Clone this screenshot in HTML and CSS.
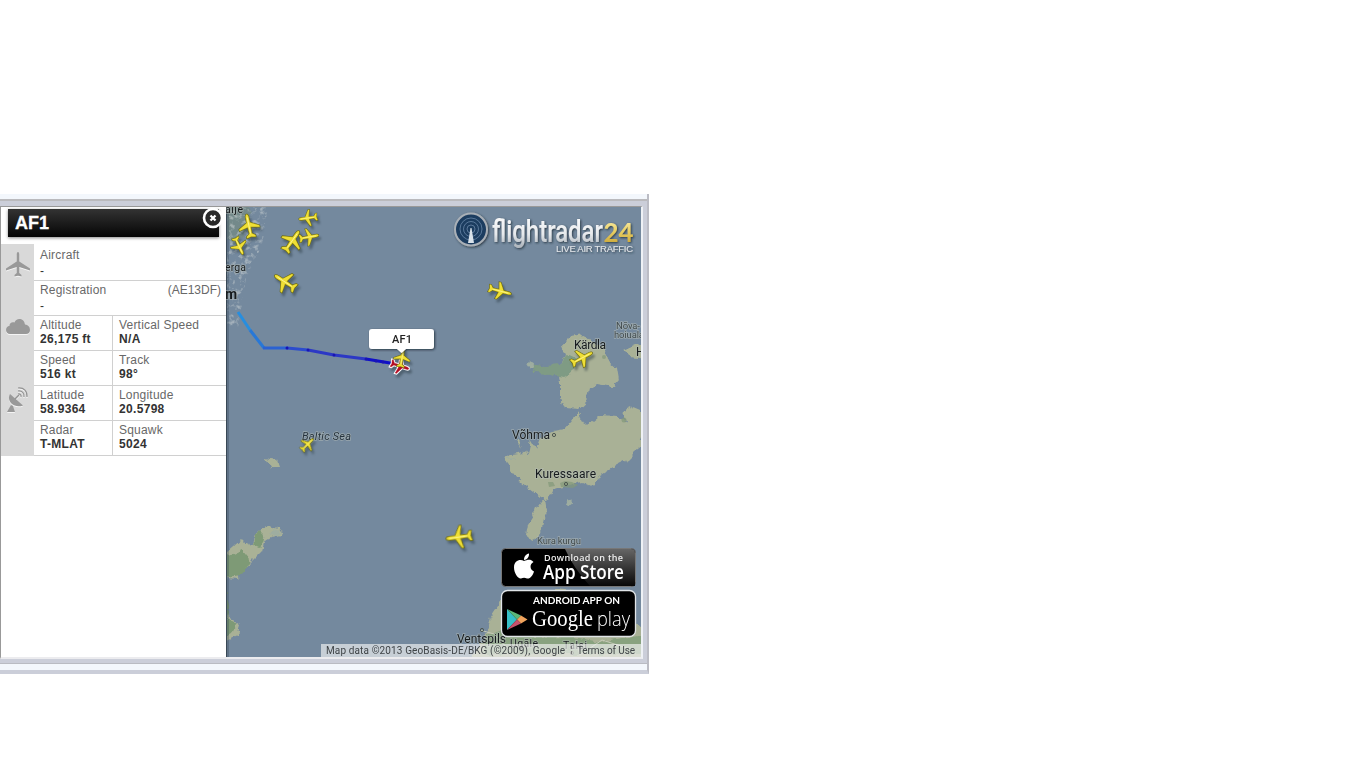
FILE: index.html
```html
<!DOCTYPE html>
<html lang="en">
<head>
<meta charset="utf-8">
<title>Flight AF1</title>
<link rel="stylesheet" href="styles.css">
</head>
<body>
<main class="widget">
  <div class="frame">
    <div class="content">
      <aside class="panel">
        <header class="callsign">AF1
          <svg class="close" viewBox="0 0 22 22"><circle cx="11" cy="11" r="9" fill="#292929" stroke="#fff" stroke-width="2.6"/><path d="M8.500 8.500l5 5M13.500 8.500l-5 5" stroke="#fff" stroke-width="2.300"/></svg>
        </header>
        <div class="details">
          <div class="rail">
            <svg class="rail-plane" viewBox="0 0 24 26"><path d="M12 1c-1 0-1.300 1.500-1.300 3v6.500L0 17.500V19.500l10.700-3.500v6L8.500 24v1.500l3.500-.7 3.500.7V24l-2.200-2V16L24 19.500v-2l-10.700-7V4c0-1.500-.3-3-1.300-3z"/></svg>
            <svg class="rail-cloud" viewBox="0 0 24 17"><path d="M4 16C1.500 16 0 14 0 12 0 9.500 1.800 8 3.500 7.800 3.500 5 6 3.500 8.500 4.500 10-.5 18-.5 19 6.500c3 .3 5 2.300 5 5.500 0 2.500-1.500 4-4 4z"/></svg>
            <svg class="rail-dish" viewBox="0 0 22 26"><path d="M3 7c-4 7 4 15 13 11.500zM4 18l-4 7h8l-2-6z"/><path d="M8 12l4-4" stroke="#929292" stroke-width="1.500"/><g fill="none" stroke="#929292" stroke-width="1.200"><path d="M11 7c2-.5 3.500 1 3 3M11 4c4-.5 6.500 2 6 6M11 1c6-.5 9.500 3 9 9"/></g></svg>
          </div>
          <div class="rows">
            <div class="row wide"><div class="cell"><span>Aircraft</span><b class="dash">-</b></div></div>
            <div class="row wide"><div class="cell"><span class="split"><span>Registration</span><span class="hex">(AE13DF)</span></span><b class="dash">-</b></div></div>
            <div class="row"><div class="cell"><span>Altitude</span><b>26,175 ft</b></div><div class="cell"><span>Vertical Speed</span><b>N/A</b></div></div>
            <div class="row"><div class="cell"><span>Speed</span><b>516 kt</b></div><div class="cell"><span>Track</span><b>98°</b></div></div>
            <div class="row"><div class="cell"><span>Latitude</span><b>58.9364</b></div><div class="cell"><span>Longitude</span><b>20.5798</b></div></div>
            <div class="row"><div class="cell"><span>Radar</span><b>T-MLAT</b></div><div class="cell"><span>Squawk</span><b>5024</b></div></div>
          </div>
        </div>
      </aside>
      <svg class="map" viewBox="226 207 415 450">
        <defs>
          <filter id="coast" x="-10%" y="-10%" width="120%" height="120%"><feTurbulence type="fractalNoise" baseFrequency=".13" numOctaves="3" seed="4"/><feDisplacementMap in="SourceGraphic" scale="8" xChannelSelector="R" yChannelSelector="G"/></filter>
          <filter id="speckle" x="0" y="0" width="1" height="1"><feTurbulence type="fractalNoise" baseFrequency=".2" numOctaves="3" seed="8" result="n"/><feColorMatrix in="n" values="0 0 0 0 .64  0 0 0 0 .68  0 0 0 0 .68  4 0 0 0 -2"/><feComposite in2="SourceGraphic" operator="in"/></filter>
          <filter id="shade" x="-20%" y="-30%" width="140%" height="160%"><feDropShadow dx="1" dy="1" stdDeviation="1" flood-color="#1b2630" flood-opacity=".8"/></filter>
          <linearGradient id="silver" x2="0" y2="1"><stop stop-color="#fff"/><stop offset=".6" stop-color="#e6e9ec"/><stop offset=".9" stop-color="#b2b9c0"/></linearGradient>
          <linearGradient id="gold" x2="0" y2="1"><stop stop-color="#fff6c0"/><stop offset=".5" stop-color="#e8ce62"/><stop offset="1" stop-color="#c49d2e"/></linearGradient>
          <linearGradient id="black" x2="0" y2="1"><stop stop-color="#666"/><stop offset="1" stop-color="#080808"/></linearGradient>
          <path id="plane" d="M0-12C-1-12-1.500-10-1.500-8.500V-3.500L-10.500 1.500V3L-1.500 1-1.100 8-4.500 10.500V12L0 11 4.500 12V10.500L1.100 8 1.500 1 10.500 3V1.500L1.500-3.500V-8.500C1.500-10 1-12 0-12Z"/>
          <g id="jet"><use href="#plane" stroke="#66640f" stroke-width="1.600"/><use href="#plane" fill="#efdf35" stroke="#efdf35" stroke-width=".3"/><path d="M0-9V8" stroke="#fff89c" stroke-width=".8"/></g>
        </defs>
        <rect x="226" y="207" width="415" height="450" fill="#74899e"/>
        <g filter="url(#coast)" transform="translate(2 0)">
          <path fill="#748a83" opacity=".75" d="M222 203h24l3 18-8 15-8 9-8-7-7 2z"/>
          <path fill="#a9b196" d="M568 337l14-2 7 8 14 4 3 13 9 8 2 12-6 7-17-3-7 5-3 13-8 7-13-1-4-10v-17l-5-8 10-18-4-10z"/>
          <path fill="#7f9b84" d="M530 363l14 3 14-1 7-10 9 4-3 14-9 4-14-3-15-1z"/>
          <path fill="#a9b196" d="M515 440l4 4 6 11 3-16 6 10 5-12 13-6 11-2 7-8 6-9 6 12 9-3 6-5 18 1 14 8 7 9 6 11-9 7-8 8-10 5-16 10-7 12-12-5-17 4-11 2-6 12-9-3-18-15-14-18-3-4 8-6 13-2-5-12z"/>
          <path fill="#a9b196" d="M542 498l2 13-4 17-8 12-9-4 2-12 8-13zM620 413l12-6 12 5v29l-14-8-7-13zM623 349l9-4 12-2v16l-16-2zM263 458l12 2 2 6-8 3z"/>
          <path fill="#a9b196" d="M224 553l15-13 9 4 8-13 11-5 12 4-1 5-15 4-3 12-13 13-12 15-11-1zM224 615l14 10-3 10-11 5z"/>
          <path fill="#7e9a76" d="M223 558l17-8 8 10-8 15-17 2zM223 590l4 14-4 20zM223 619l10 3-2 10-8 4zM249 544l8-14 5 5-4 13z"/>
          <path fill="#a9b196" d="M481 642l9-28 12-18 21-4 11 3 18-6 30 3 22 3 40 38v30H465z"/>
          <path fill="#88a27f" d="M485 635l20-8 26 10 35-1 32 6 44-8v20H482z"/>
          <path fill="#9eada0" d="M526 361l7 2-2 5-7-2zM271 529l8 2-3 4-7-1zM505 459l9-1v2h-9zM566 498l4 3-3 4-4-3z"/>
        </g>
        <g fill="#84997a" opacity=".7"><circle cx="624" cy="420" r="2.500"/><path d="M548 482h5l2 4-6 1zM560 483l5-2 7 1 6 3-5 3-12-1z"/><circle cx="604" cy="357" r="2"/></g>
        <path filter="url(#speckle)" opacity=".5" d="M226 207h42l-6 38-16 33-8 50h-12z"/>
        <path d="M480 630l14 4 16 17M576 640l4 15 22-15 28 9" fill="none" stroke="#c5cab8"/>
        <rect x="226" y="207" width="3" height="450" fill="#2c3d4d" opacity=".3"/><rect x="226" y="207" width="1" height="450" fill="#394855"/>

        <g class="labels">
          <text x="225" y="213" textLength="18">alje</text><text x="225" y="271" textLength="21">erga</text>
          <text x="225" y="299" class="big">m</text>
          <text x="302" y="440" textLength="49" class="sea">Baltic Sea</text>
          <text x="574" y="349" textLength="32" class="town">Kärdla</text>
          <text x="616" y="329" class="small" textLength="24">Nõva-</text><text x="614" y="338" class="small" textLength="30">hoiuala</text>
          <text x="636" y="356" class="town">H</text>
          <text x="512" y="439" textLength="38" class="town">Võhma</text>
          <text x="535" y="478" textLength="61" class="town">Kuressaare</text>
          <text x="537" y="544" textLength="44" class="small">Kura kurgu</text>
          <text x="457" y="643" textLength="49" class="town">Ventspils</text><text x="510" y="647" textLength="28">Ugāle</text><text x="563" y="649" textLength="24">Talsi</text>
        </g>
        <g fill="none" stroke="#4d5651"><circle cx="554" cy="435" r="1.600"/><circle cx="566" cy="484" r="1.600"/><circle cx="482" cy="630" r="1.600"/><circle cx="572" cy="653" r="1.600"/></g>

        <g fill="none" stroke-width="3" stroke-linejoin="round"><path d="M238 312l12 18" stroke="#278edf"/><path d="M250 330l14 18" stroke="#2878d7"/><path d="M263 348h25" stroke="#2b62d2"/><path d="M287 348l21 2" stroke="#2c4ccd"/><path d="M308 350l26 5 32 4" stroke="#2c38c5"/><path d="M366 359l30 5" stroke="#1010c8"/></g>
        <g fill="#1914b4"><circle cx="287" cy="348" r="1.500"/><circle cx="308" cy="350" r="1.500"/><circle cx="334" cy="355" r="1.500"/><circle cx="366" cy="359" r="1.500"/><circle cx="376" cy="361" r="1.500"/><circle cx="383" cy="362" r="1.500"/></g>

        <g class="jets">
          <use href="#jet" transform="translate(249 226) rotate(-12) scale(.97)"/>
          <use href="#jet" transform="translate(239 246) rotate(155) scale(.76)"/>
          <use href="#jet" transform="translate(308 218) rotate(262) scale(.76)"/>
          <use href="#jet" transform="translate(292 241) rotate(35)"/>
          <use href="#jet" transform="translate(309 237) rotate(80) scale(.8)"/>
          <use href="#jet" transform="translate(285 282) rotate(-57)"/>
          <use href="#jet" transform="translate(500 291) rotate(105) scale(.8 .95)"/>
          <use href="#jet" transform="translate(582 358) rotate(62) scale(.85 .95)"/>
          <use href="#jet" transform="translate(459 537) rotate(262) scale(1.050)"/>
          <use href="#jet" transform="translate(307.500 444.500) rotate(45) scale(.65)"/>
          <g transform="translate(400 366) rotate(108) scale(.77)"><use href="#plane" stroke="#fff" stroke-width="3.200"/><use href="#plane" fill="#b40b22" stroke="#b40b22" stroke-width=".6"/></g>
          <use href="#jet" transform="translate(402 358) rotate(10) scale(.76)"/>
        </g>
        <g filter="url(#shade)"><path d="M372 329h59q3 0 3 3v14q0 3-3 3h-25l-4.500 4-4.500-4h-25q-3 0-3-3v-14q0-3 3-3z" fill="#fff"/></g>
        <text x="392" y="343" textLength="20" class="tip">AF1</text>

        <g filter="url(#shade)">
          <circle cx="471" cy="229.500" r="16" fill="#1d3c60" stroke="#a9b0b7" stroke-width="2"/>
          <g fill="none" stroke="#6888a8" stroke-width=".8"><circle cx="471" cy="229" r="11"/><circle cx="471" cy="229" r="7.500"/><circle cx="471" cy="229" r="4"/></g>
          <path d="M470.500 228h1l2.500 15h-6z" fill="#d9e2ea"/>
          <text x="492" y="241.500" class="brand" textLength="111" lengthAdjust="spacingAndGlyphs" fill="url(#silver)">flightradar</text>
          <text x="603.500" y="241.500" class="number" textLength="30" lengthAdjust="spacingAndGlyphs" fill="url(#gold)">24</text>
          <text x="556" y="252" class="tag" textLength="77">LIVE AIR TRAFFIC</text>
        </g>

        <g>
          <rect x="501.500" y="548.500" width="134" height="38" rx="4" fill="#000" stroke="#777"/>
          <path d="M565 549h66q4 0 4 4v33h-45q-16-17-25-37z" fill="url(#black)"/>
          <g transform="translate(513 554)" fill="#fff"><path d="M11 7C8 5 1 5.500 1 13.500 1 19 5 25 8 24.500c2-.5 3-1.200 6 0 3 .8 6-3.500 7-7-4.500-2-4.500-7.500-.5-9.500C17.500 4.500 14 6 11 7z"/><path d="M11 6c-.3-3 2-6 5-6.500C16.300 3 14 5.800 11 6z"/></g>
          <text x="544" y="561" class="store-small" textLength="79">Download on the</text>
          <text x="543" y="579" class="store" textLength="81" lengthAdjust="spacingAndGlyphs">App Store</text>
          <rect x="501.500" y="590.500" width="134" height="46" rx="6" fill="#000" stroke="#e1e5e8" stroke-width="1.300"/>
          <path d="M507 609v21l10-10.500z" fill="#36bfc7"/><path d="M507 609l10 10.500 4-4z" fill="#5bb879"/><path d="M521 615.500l-4 4 4 4 6.500-4z" fill="#efa35c"/><path d="M507 630l10-10.500 4 4z" fill="#c6526b"/>
          <text x="533" y="604" class="android" textLength="87" lengthAdjust="spacingAndGlyphs">ANDROID APP ON</text>
          <text x="532" y="626" class="google" textLength="61" lengthAdjust="spacingAndGlyphs">Google</text><text x="597" y="626" class="play" textLength="33" lengthAdjust="spacingAndGlyphs">play</text>
        </g>
        <rect x="321" y="644" width="320" height="13" fill="#f5f5f5" opacity=".65"/>
        <g class="credits"><text x="326" y="654" textLength="239">Map data ©2013 GeoBasis-DE/BKG (©2009), Google</text><text x="577" y="654" textLength="58">Terms of Use</text></g>
        <path d="M571.500 646v9" stroke="#777" stroke-dasharray="3 2"/>
      </svg>
    </div>
  </div>
</main>
</body>
</html>
```
FILE: styles.css
```css
body { margin: 0; background: #fff; font-family: "Liberation Sans", Arial, sans-serif; }
.widget { box-sizing: border-box; width: 649px; height: 480px; margin-top: 194px; padding-top: 5px; background: #f3f7fc; border-right: 2px solid #bbbcc4; border-bottom: 4px solid #cbced9; }
.frame { box-sizing: border-box; height: 465px; border-top: 2px solid #bababd; border-bottom: 1px solid #b9bbc2; background: #cbced9; padding: 5px 4px 5px 0; }
.content { box-sizing: border-box; display: flex; height: 453px; width: 643px; border: solid #999; border-width: 1px 0 0 1px; border-right: 2px solid #eef1f5; border-bottom: 2px solid #ececef; background: #fff; }
.panel { width: 225px; flex: none; }
.callsign { position: relative; box-sizing: border-box; width: 211px; height: 28px; margin: 2px 0 7px 7px; padding-left: 7px; background: linear-gradient(#333, #050505); color: #fff; font: bold 18px/28px "Liberation Sans", sans-serif; -webkit-text-stroke: .3px #fff; box-shadow: 0 1px 3px #888; }
.close { position: absolute; width: 22px; height: 22px; right: -5px; top: -2px; }
.details { display: flex; }
.rail { box-sizing: border-box; width: 33px; height: 212px; background: #d9d9d9; display: flex; flex-direction: column; align-items: center; padding-top: 7px; }
.rail svg { fill: #999; filter: drop-shadow(0 1px 0 #f4f4f4); }
.rail-plane { width: 24px; height: 26px; }
.rail-cloud { width: 24px; height: 17px; margin-top: 41px; }
.rail-dish { width: 22px; height: 26px; margin-top: 52px; }
.rows { width: 192px; font-size: 12px; line-height: 15px; letter-spacing: .2px; color: #686868; }
.row { display: grid; grid-template-columns: 78px 1fr; box-sizing: border-box; height: 35px; border-bottom: 1px solid #d0d0d0; }
.row.wide { grid-template-columns: 1fr; }
.row:first-child { height: 37px; padding-top: 2px; }
.cell { padding: 2px 6px 0; }
.cell + .cell { border-left: 1px solid #d0d0d0; }
.cell > span, .cell > b { display: block; }
.cell > span { height: 14px; }
.cell b { color: #333; letter-spacing: .32px; }
.cell .dash { margin-top: 1px; font-weight: normal; line-height: 17px; }
.cell .split { display: flex; justify-content: space-between; margin-right: -1px; }
.hex { letter-spacing: 0; }
.map { display: block; width: 415px; height: 450px; flex: none; }
.labels { font: 10.5px Roboto, sans-serif; fill: #171b1e; stroke: #b5beb9; stroke-width: 1.5px; stroke-opacity: .6; paint-order: stroke; }
.labels .town { font-size: 12px; font-weight: 400; }
.labels .small { font-size: 9.5px; fill: #414b4e; }
.labels .big { font-size: 14px; font-weight: 700; }
.labels .sea { font-size: 11px; font-style: italic; fill: #26333f; }
.jets { filter: drop-shadow(2px 3px 1px rgba(35, 50, 60, .45)); }
.tip { font: 500 11px Roboto, sans-serif; fill: #222; }
.brand { font: 500 32px Roboto, sans-serif; }
.number { font: 700 26px Lato, sans-serif; }
.tag { font: 9.5px "Liberation Sans", sans-serif; fill: #e2e6e9; }
.store-small { font: 600 9px "Open Sans", sans-serif; fill: #eee; }
.store { font: 600 19px "Open Sans", sans-serif; fill: #fff; }
.android { font: 700 9px Lato, sans-serif; fill: #fff; }
.google { font: 23px "Liberation Serif", serif; fill: #fff; }
.play { font: 300 21px "Open Sans", sans-serif; fill: #fff; }
.credits { font: 10px Roboto, sans-serif; fill: #3f4447; }
```
